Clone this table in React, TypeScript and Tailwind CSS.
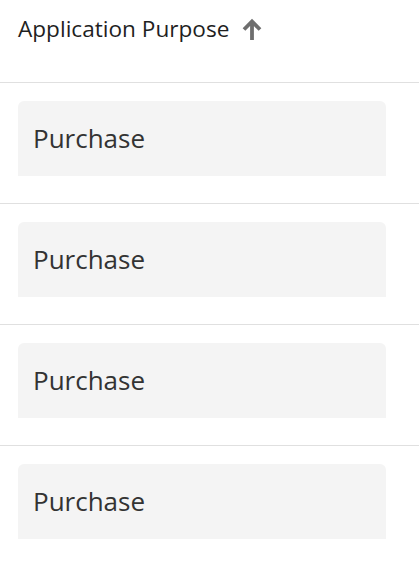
import React from "react";

export default function App() {
  const rows = ["Purchase", "Purchase", "Purchase", "Purchase"];
  return (
    <div className="w-[419px] h-[566px] overflow-hidden bg-white" style={{ fontFamily: '"Open Sans", sans-serif' }}>
      <div className="h-[83px] flex items-start pt-[13px] pl-[18px] border-b border-[#e0e0e0]">
        <span className="text-[22.6px] leading-[32px] text-[#1f1f1f]">Application Purpose</span>
        <svg className="ml-[12px] mt-[4px]" width="22" height="24" viewBox="0 0 22 24" fill="none">
          <path d="M11 23V4.5M3 12.5L11 4.5L19 12.5" stroke="#6e6e6e" strokeWidth="3.8" strokeLinecap="butt" strokeLinejoin="miter" />
        </svg>
      </div>
      {rows.map((r, i) => (
        <div key={i} className="pt-[18px] pb-[27px] border-b border-[#e0e0e0]">
          <div className="ml-[18px] w-[368px] h-[75px] bg-[#f4f4f4] rounded-t-[6px] pl-[15px] pt-[19px]">
            <span className="text-[26px] leading-[36px] text-[#333333]">{r}</span>
          </div>
        </div>
      ))}
    </div>
  );
}
